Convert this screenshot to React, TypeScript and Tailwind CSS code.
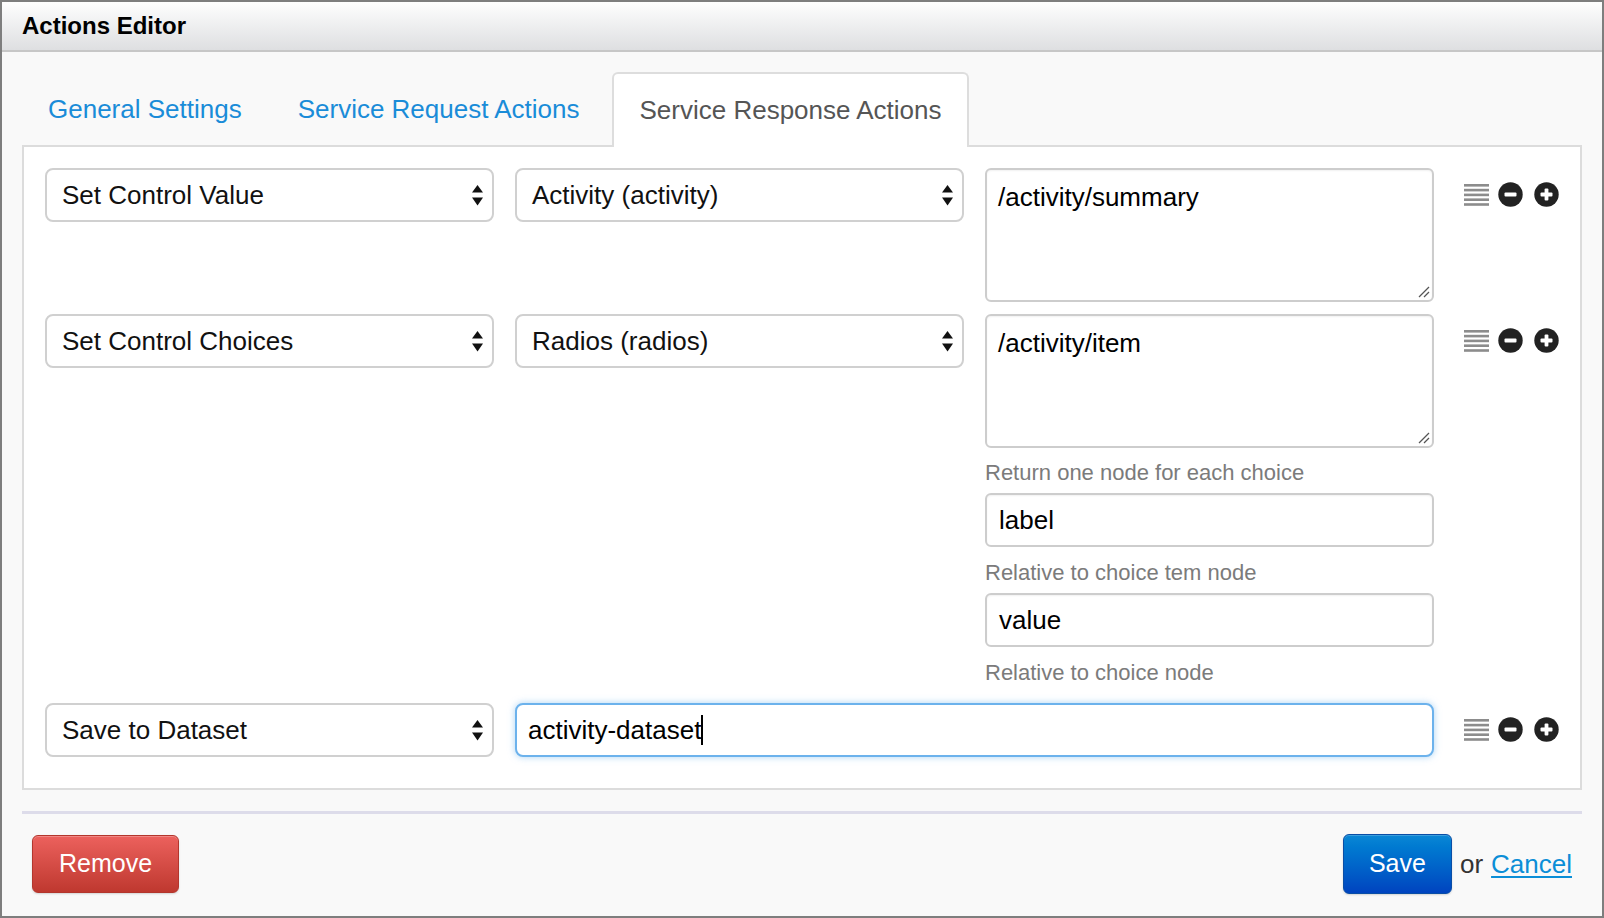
import React from "react";

const Arrows = () => (
  <svg width="11" height="21" viewBox="0 0 11 21" className="shrink-0">
    <polygon points="5.5,0 11,7.5 0,7.5" fill="#111" />
    <polygon points="0,12.5 11,12.5 5.5,20.5" fill="#111" />
  </svg>
);

const Select = ({ label }: { label: string }) => (
  <div className="w-[449px] h-[54px] shrink-0 rounded-[8px] border-2 border-[#d0d0d0] bg-white flex items-center justify-between pl-[15px] pr-[9px]">
    <span className="text-[26px] text-[#111] leading-[30px]">{label}</span>
    <Arrows />
  </div>
);

const Icons = () => (
  <div className="ml-[30px] mt-[14px] flex items-center shrink-0">
    <svg width="25" height="24" viewBox="0 0 25 24">
      {[1, 5.8, 10.6, 15.4, 20.2].map((y) => (
        <rect key={y} x="0" y={y} width="25" height="2.6" fill="#8c8c8c" />
      ))}
    </svg>
    <svg width="25" height="25" viewBox="0 0 25 25" className="ml-[9px]">
      <circle cx="12.5" cy="12.5" r="12.2" fill="#222" />
      <rect x="6.5" y="10.6" width="12" height="3.8" rx="1" fill="#fff" />
    </svg>
    <svg width="25" height="25" viewBox="0 0 25 25" className="ml-[11px]">
      <circle cx="12.5" cy="12.5" r="12.2" fill="#222" />
      <rect x="6.5" y="10.6" width="12" height="3.8" rx="1" fill="#fff" />
      <rect x="10.6" y="6.5" width="3.8" height="12" rx="1" fill="#fff" />
    </svg>
  </div>
);

const Area = ({ value }: { value: string }) => (
  <div className="relative w-[449px] h-[134px] shrink-0">
    <textarea
      readOnly
      defaultValue={value}
      className="block w-[449px] h-[134px] resize-none rounded-[6px] border-2 border-[#cdcdcd] bg-white pl-[11px] pt-[12px] text-[26px] leading-[30px] text-black outline-none shadow-[inset_0_1px_2px_rgba(0,0,0,0.06)] font-['Liberation_Sans',Arial,sans-serif]"
    />
    <svg width="12" height="12" viewBox="0 0 12 12" className="absolute right-[4px] bottom-[4px]">
      <line x1="1" y1="11" x2="11" y2="1" stroke="#555" strokeWidth="1.3" />
      <line x1="6" y1="11" x2="11" y2="6" stroke="#555" strokeWidth="1.3" />
    </svg>
  </div>
);

const Input = ({ value }: { value: string }) => (
  <div className="w-[449px] h-[54px] rounded-[6px] border-2 border-[#cdcdcd] bg-white pl-[12px] flex items-center shadow-[inset_0_1px_2px_rgba(0,0,0,0.06)]">
    <span className="text-[26px] leading-[30px] text-black">{value}</span>
  </div>
);

const Help = ({ text, cls }: { text: string; cls: string }) => (
  <div className={"h-[28px] leading-[28px] text-[22px] text-[#7b7b7b] " + cls}>{text}</div>
);

export default function App() {
  return (
    <div className="w-[1604px] h-[918px] border-2 border-[#7e7e7e] bg-[#f9f9f9] flex flex-col font-['Liberation_Sans',Arial,sans-serif] overflow-hidden">
      <div className="h-[50px] shrink-0 bg-gradient-to-b from-[#fefefe] to-[#dedfe1] border-b-2 border-[#c7c7c7] flex items-center pl-[20px]">
        <span className="text-[24px] font-bold text-black leading-[28px]">Actions Editor</span>
      </div>

      <div className="px-[20px] flex flex-col">
        <div className="mt-[20px] -mb-[2px] relative z-10 flex items-end">
          <div className="h-[75px] border-2 border-transparent px-[24px] flex items-center text-[26px] text-[#1a8cd8]">
            General Settings
          </div>
          <div className="ml-[4px] h-[75px] border-2 border-transparent px-[24px] flex items-center text-[26px] text-[#1a8cd8]">
            Service Request Actions
          </div>
          <div className="ml-[7px] h-[75px] border-2 border-b-0 border-[#dddddd] rounded-t-[6px] bg-white px-[25px] flex items-center text-[26px] text-[#555]">
            <span>Service Response Actions</span>
          </div>
        </div>

        <div className="border-2 border-[#dcdcdc] bg-white px-[21px] pt-[21px] pb-[31px] flex flex-col">
          <div className="flex items-start mb-[12px]">
            <Select label="Set Control Value" />
            <div className="ml-[21px]">
              <Select label="Activity (activity)" />
            </div>
            <div className="ml-[21px]">
              <Area value="/activity/summary" />
            </div>
            <Icons />
          </div>

          <div className="flex items-start mb-[16px]">
            <Select label="Set Control Choices" />
            <div className="ml-[21px]">
              <Select label="Radios (radios)" />
            </div>
            <div className="ml-[21px] flex flex-col">
              <Area value="/activity/item" />
              <Help text="Return one node for each choice" cls="mt-[11px] mb-[6px]" />
              <Input value="label" />
              <Help text="Relative to choice tem node" cls="mt-[12px] mb-[6px]" />
              <Input value="value" />
              <Help text="Relative to choice node" cls="mt-[12px]" />
            </div>
            <Icons />
          </div>

          <div className="flex items-start">
            <Select label="Save to Dataset" />
            <div className="ml-[21px] w-[919px] h-[54px] rounded-[8px] border-2 border-[#6cb2ec] bg-white pl-[11px] flex items-center shadow-[0_0_7px_rgba(102,175,233,0.55)]">
              <span className="text-[26px] leading-[30px] text-black">activity-dataset</span>
              <span className="w-[2px] h-[30px] bg-black" />
            </div>
            <Icons />
          </div>
        </div>

        <div className="mt-[21px] h-[3px] bg-[#dddcea]" />

        <div className="mt-[20px] px-[10px] h-[60px] flex items-center justify-between">
          <div className="w-[147px] h-[58px] rounded-[6px] border border-[#b3362d] bg-gradient-to-b from-[#ec615d] to-[#bf382f] shadow-[inset_0_1px_0_rgba(255,255,255,0.25),0_1px_2px_rgba(0,0,0,0.15)] flex items-center justify-center">
            <span className="text-[25px] text-white">Remove</span>
          </div>
          <div className="flex items-center">
            <div className="w-[109px] h-[60px] rounded-[6px] border border-[#0a4ea6] bg-gradient-to-b from-[#0b87d5] to-[#0043bf] shadow-[inset_0_1px_0_rgba(255,255,255,0.2),0_1px_2px_rgba(0,0,0,0.15)] flex items-center justify-center">
              <span className="text-[25px] text-white">Save</span>
            </div>
            <span className="ml-[8px] text-[26px] text-[#333]">or</span>
            <span className="ml-[8px] text-[26px] text-[#0b8ed7] underline underline-offset-[3px]">Cancel</span>
          </div>
        </div>
      </div>
    </div>
  );
}
